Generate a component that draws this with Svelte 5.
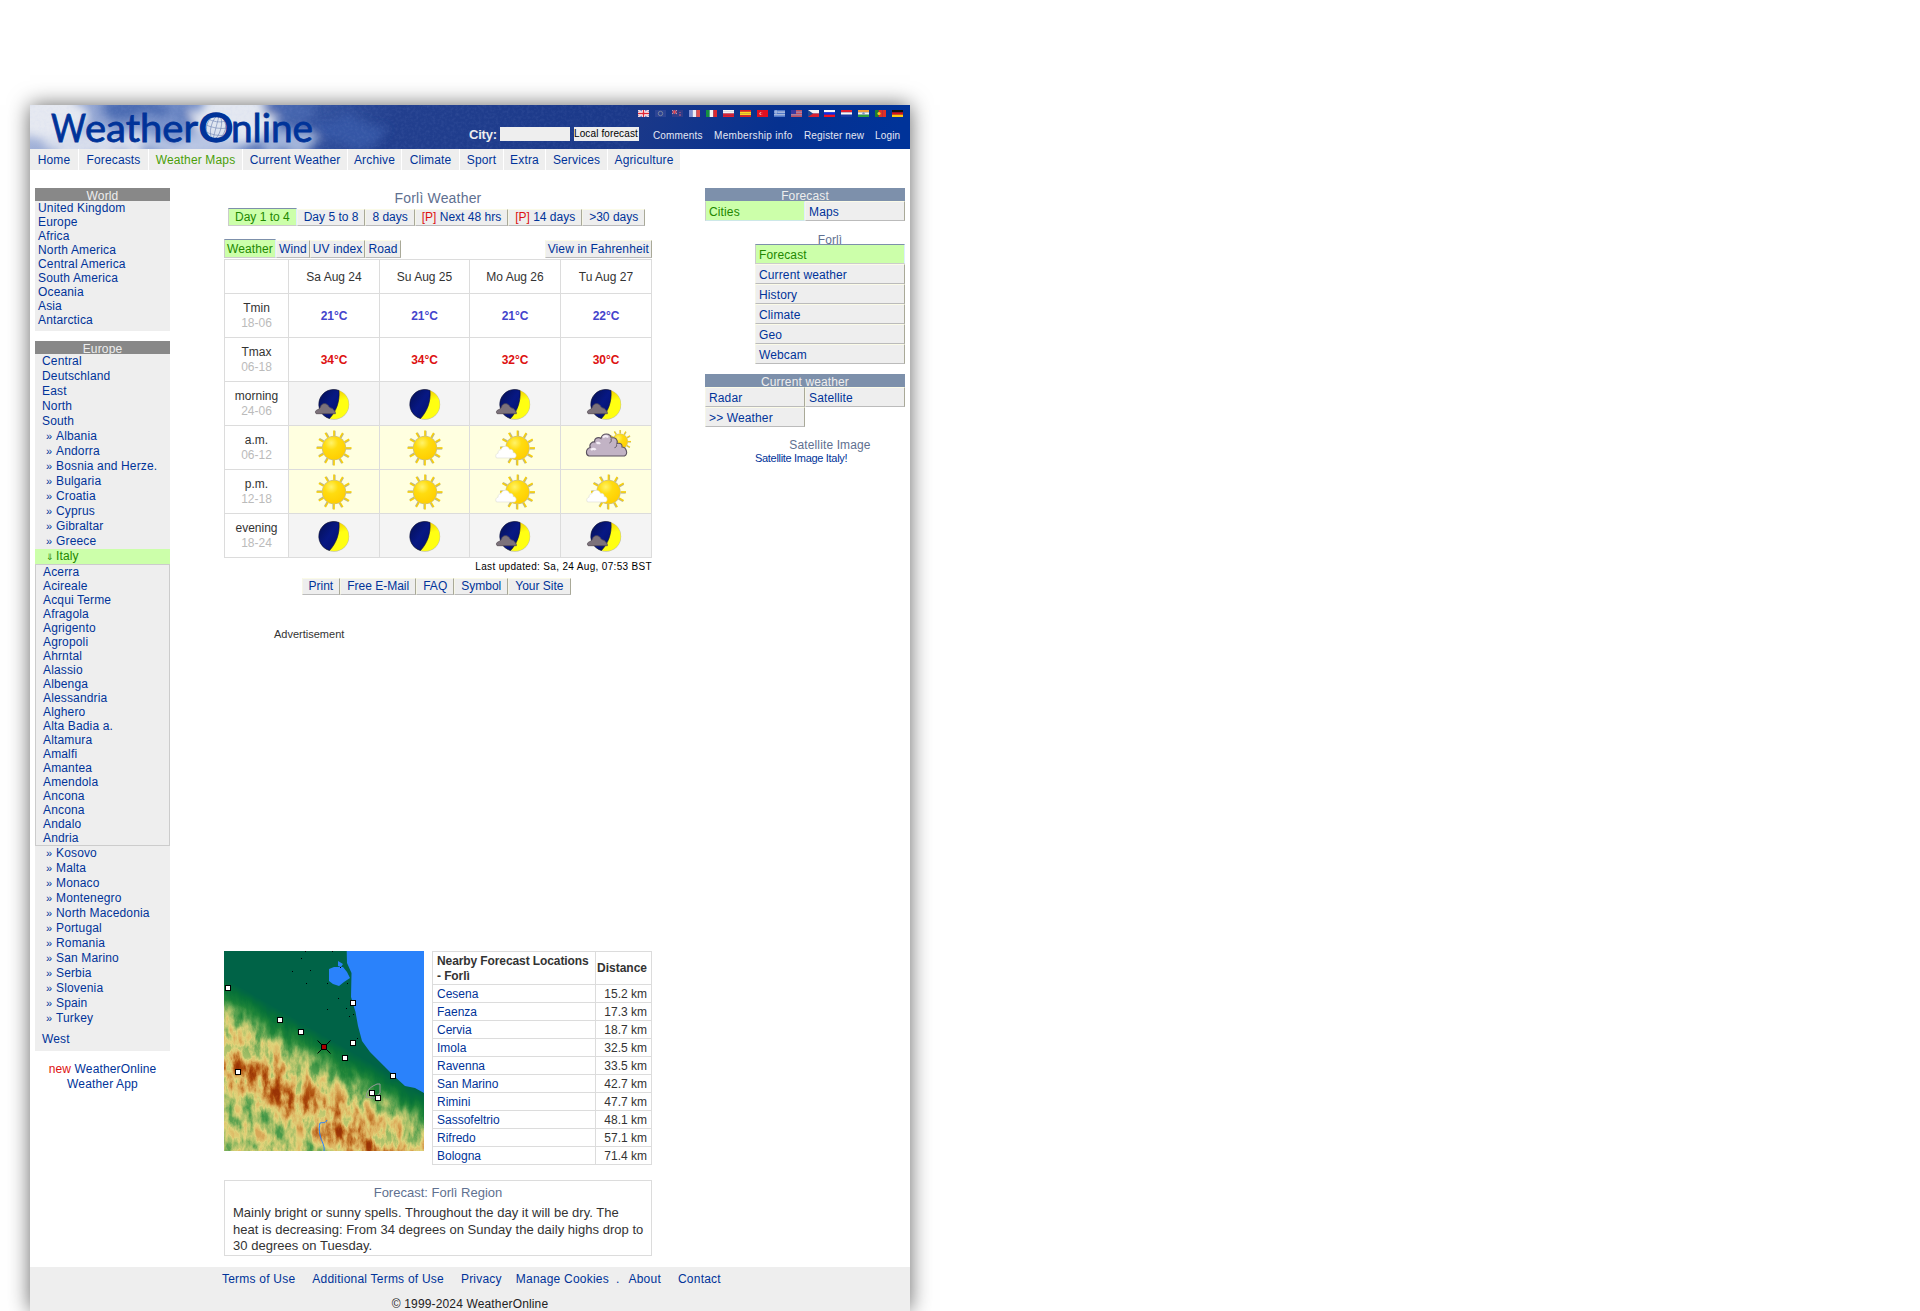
<script>
  const nav = [['Home', 48], ['Forecasts', 69], ['Weather Maps', 93], ['Current Weather', 104], ['Archive', 53], ['Climate', 57], ['Sport', 43], ['Extra', 41], ['Services', 61], ['Agriculture', 72]];
  const world = ['United Kingdom', 'Europe', 'Africa', 'North America', 'Central America', 'South America', 'Oceania', 'Asia', 'Antarctica'];
  const regions = ['Central', 'Deutschland', 'East', 'North', 'South'];
  const southA = ['Albania', 'Andorra', 'Bosnia and Herze.', 'Bulgaria', 'Croatia', 'Cyprus', 'Gibraltar', 'Greece'];
  const cities = ['Acerra', 'Acireale', 'Acqui Terme', 'Afragola', 'Agrigento', 'Agropoli', 'Ahrntal', 'Alassio', 'Albenga', 'Alessandria', 'Alghero', 'Alta Badia a.', 'Altamura', 'Amalfi', 'Amantea', 'Amendola', 'Ancona', 'Ancona', 'Andalo', 'Andria'];
  const southB = ['Kosovo', 'Malta', 'Monaco', 'Montenegro', 'North Macedonia', 'Portugal', 'Romania', 'San Marino', 'Serbia', 'Slovenia', 'Spain', 'Turkey'];
  const days = ['Sa Aug 24', 'Su Aug 25', 'Mo Aug 26', 'Tu Aug 27'];
  const rows = [
    { name: 'Tmin', hours: '18-06', kind: 'cold', cells: ['21°C', '21°C', '21°C', '22°C'] },
    { name: 'Tmax', hours: '06-18', kind: 'hot', cells: ['34°C', '34°C', '32°C', '30°C'] },
    { name: 'morning', hours: '24-06', kind: 'night', cells: ['mooncloud', 'moon', 'mooncloud', 'mooncloud'] },
    { name: 'a.m.', hours: '06-12', kind: 'day', cells: ['sun', 'sun', 'suncloud', 'cloudy'] },
    { name: 'p.m.', hours: '12-18', kind: 'day', cells: ['sun', 'sun', 'suncloud', 'suncloud'] },
    { name: 'evening', hours: '18-24', kind: 'night', cells: ['moon', 'moon', 'mooncloud', 'mooncloud'] }
  ];
  const nearby = [['Cesena', '15.2'], ['Faenza', '17.3'], ['Cervia', '18.7'], ['Imola', '32.5'], ['Ravenna', '33.5'], ['San Marino', '42.7'], ['Rimini', '47.7'], ['Sassofeltrio', '48.1'], ['Rifredo', '57.1'], ['Bologna', '71.4']];
  const stations = [[4, 37], [56, 69], [77, 81], [129, 52], [129, 92], [121, 107], [169, 125], [14, 121], [148, 142], [154, 147]];
  const villages = [[81, 0], [77, 7], [108, 0], [68, 20], [86, 19], [82, 32], [103, 32], [114, 47], [103, 58], [122, 57], [129, 63], [125, 65], [123, 32], [116, 16], [133, 87]];
  const rays = Array.from({ length: 12 }, (_, i) => i * 30);
  const flags = ['gb', 'eu', 'au', 'fr', 'it', 'pl', 'es', 'tr', 'gr', 'us', 'cz', 'ru', 'nl', 'in', 'pt', 'de'];
  const bands = {
    fr: ['v', '#7d8fd0', '#eeeef4', '#e05050'], it: ['v', '#149040', '#f4f4f4', '#dc2a30'],
    pl: ['h', '#f4f4f4', '#f4f4f4', '#dd2030', '#dd2030'], es: ['h', '#e02020', '#ffd520', '#ffd520', '#e02020'],
    ru: ['h', '#f8f8f8', '#1028e8', '#f01020'], nl: ['h', '#e02030', '#f8f8f8', '#1838a0'],
    in: ['h', '#f0a040', '#f4f4f4', '#30a040'], pt: ['v', '#208030', '#e03028', '#e03028'],
    de: ['h', '#111', '#e01010', '#ffcc10'], tr: ['h', '#e01020'], gr: ['h', '#5078c8', '#c8d4ec', '#5078c8', '#c8d4ec', '#5078c8'],
    us: ['h', '#c05060', '#c890a8', '#c05060', '#c890a8', '#c05060'], cz: ['h', '#f4f4f4', '#d82030'],
    gb: ['h', '#8080c0'], eu: ['h', '#2c4494'], au: ['h', '#303c88']
  };
</script>

{#snippet flag(code)}
  {@const b = bands[code]}
  {@const n = b.length - 1}
  <svg class="flag" width="11" height="7" viewBox="0 0 11 7">
    {#each b.slice(1) as c, i}
      {#if b[0] === 'v'}
        <rect x={(11 / n) * i} y="0" width={11 / n + 0.1} height="7" fill={c} />
      {:else}
        <rect x="0" y={(7 / n) * i} width="11" height={7 / n + 0.1} fill={c} />
      {/if}
    {/each}
    {#if code === 'gb'}
      <path d="M0 0L11 7M11 0L0 7" stroke="#f0d8e0" stroke-width="1.6" /><path d="M5.5 0V7M0 3.5H11" stroke="#fff" stroke-width="3" /><path d="M5.5 0V7M0 3.5H11" stroke="#e02838" stroke-width="1.4" />
    {:else if code === 'eu'}
      <circle cx="5.5" cy="3.5" r="2.2" fill="none" stroke="#8a90a0" stroke-width=".8" />
    {:else if code === 'au'}
      <path d="M0 0L5 4M5 0L0 4" stroke="#d8a0b0" /><path d="M2.5 0V4M0 2H5" stroke="#d84050" /><path d="M8 2v1M7 5h2" stroke="#d06080" />
    {:else if code === 'tr'}
      <circle cx="4" cy="3.5" r="1.6" fill="#f4c8cc" /><circle cx="4.7" cy="3.5" r="1.3" fill="#e01020" />
    {:else if code === 'gr'}
      <rect width="4" height="4" fill="#5078c8" /><path d="M2 0V4M0 2H4" stroke="#c8d4ec" stroke-width=".8" />
    {:else if code === 'us'}
      <rect width="5" height="4" fill="#3838a0" />
    {:else if code === 'cz'}
      <path d="M0 0L5 3.5L0 7Z" fill="#204890" />
    {:else if code === 'in'}
      <circle cx="5.5" cy="3.5" r="1.2" fill="#8090c0" />
    {:else if code === 'pt'}
      <circle cx="4" cy="3.5" r="1.6" fill="#f0d020" />
    {/if}
  </svg>
{/snippet}

{#snippet sunShape(cx, cy)}
  <g transform="translate({cx} {cy})">
    {#each rays as a}
      <g transform="rotate({a})"><path d="M.7 -12V-17.2" stroke="#b8b49a" stroke-width="1.8" /><path d="M0 -12V-17.5" stroke="#f5cf10" stroke-width="1.7" /></g>
    {/each}
    <circle r="12.2" fill="#c9bf8a" />
    <circle r="11.500" fill="url(#sunFill)" />
  </g>
{/snippet}

{#snippet icon(kind)}
  <svg class="wx" width="50" height="42" viewBox="0 0 50 42">
    {#if kind === 'sun'}
      {@render sunShape(25, 21)}
    {:else if kind === 'suncloud'}
      {@render sunShape(27.5, 21)}
      <path transform="translate(-.5 .5)" d="M7 30.500c-1.800-2.600 0-4.500 1.500-4.700 0-2.800 1.700-3.800 3-3.500 1-4.500 7.200-4.700 8.500-.5 3-.4 4 1.500 3.600 3.200 3.500 0 4 4.500 1.400 5.500z" fill="#fff" stroke="#dcdcd4" stroke-width=".6" />
    {:else if kind === 'cloudy'}
      <g transform="translate(0 -1.500)">
        <g transform="translate(39 16) scale(.66)">{@render sunShape(0, 0)}</g>
        <path d="M8 30.500c-3.500-1-3.700-7 1.200-8.500-1.500-4 2.500-6 4.500-5.500-.7-5 4.800-4.800 6.300-3.500 1.500-6.500 9.500-5.500 10.200-.5 4-1.200 7 1.800 5.800 5.500 3.500-1 5.500.8 5 3.500 4.300 0 6.500 7 2.500 9.000z" fill="#c2b3c5" stroke="#5c5360" stroke-width="1.100" />
        <path d="M10 24.500c2-1.800 4-1 4.500 0M15.500 18c1-1 2.500-1 3.500.5M22 12c2-2 4-1.500 5 0" fill="none" stroke="#f4eef6" stroke-width="2.200" />
        <path d="M30 13.500c.8 2-.3 3.500-1.500 4M35.500 19c.5 1.800-.6 3-2 3.200" fill="none" stroke="#5c5360" />
      </g>
    {:else}
      <g transform="translate(0 .700)">
        <circle cx="25" cy="20.900" r="15.200" fill="#c5c39c" />
        <circle cx="25" cy="20.700" r="14.700" fill="url(#moonLight)" />
        <path d="M30 6.800A14.800 14.800 0 1 0 20.500 34.800C27 28 31 18 30 6.800z" fill="url(#moonDark)" stroke="#050a3c" stroke-width=".6" />
        {#if kind === 'mooncloud'}
          <path transform="translate(-.8 -.5)" d="M8 30.500c-2-2.300.3-3.800 2-4.200 1.500-1 2.200-1.800 3-4.200 1.500-2 5-2.300 7 .2.700 1.500 1.600 2.400 4 2.900 1.500 1.600 3.500 2.900 3.200 5.300z" fill="#7c727b" stroke="#554c54" stroke-width=".8" />
        {/if}
      </g>
    {/if}
  </svg>
{/snippet}

<svg class="defs" width="0" height="0" aria-hidden="true">
  <defs>
    <radialGradient id="sunFill" cx=".38" cy=".28" r=".75"><stop offset="0" stop-color="#fff36a" /><stop offset=".4" stop-color="#ffdc10" /><stop offset="1" stop-color="#ffce00" /></radialGradient>
    <linearGradient id="moonDark" x1="0" y1="0" x2="1" y2="1"><stop offset="0" stop-color="#050f50" /><stop offset=".5" stop-color="#071884" /><stop offset="1" stop-color="#04106c" /></linearGradient>
    <linearGradient id="moonLight" x1=".5" y1="0" x2=".6" y2=".4"><stop offset="0" stop-color="#f0c800" /><stop offset="1" stop-color="#ffff12" /></linearGradient>
  </defs>
</svg>

<div class="page">
  <header>
    <svg class="sky" width="880" height="44" viewBox="0 0 880 44">
      <defs>
        <linearGradient id="sky" x1="0" x2="1" y1="0" y2=".02"><stop offset="0" stop-color="#a9b7da" /><stop offset=".12" stop-color="#7f96cb" /><stop offset=".25" stop-color="#6885c4" /><stop offset=".33" stop-color="#34539f" /><stop offset=".42" stop-color="#223f8e" /><stop offset=".7" stop-color="#1a3889" /><stop offset=".86" stop-color="#063190" /><stop offset="1" stop-color="#003399" /></linearGradient>
        <filter id="soft" x="-20%" y="-50%" width="140%" height="200%"><feTurbulence type="fractalNoise" baseFrequency=".04" numOctaves="3" seed="4" result="n" /><feDisplacementMap in="SourceGraphic" in2="n" scale="26" xChannelSelector="R" yChannelSelector="G" /><feGaussianBlur stdDeviation="5" /></filter>
        <filter id="grain" x="0" y="0" width="1" height="1"><feTurbulence type="fractalNoise" baseFrequency=".35" numOctaves="2" seed="8" /><feColorMatrix values="0 0 0 0 .4  0 0 0 0 .5  0 0 0 0 .85  1 0 0 0 -.4" /></filter>
      </defs>
      <rect width="880" height="44" fill="url(#sky)" />
      <g filter="url(#soft)">
        <ellipse cx="14" cy="12" rx="40" ry="24" fill="#e6e9f1" />
        <ellipse cx="64" cy="38" rx="52" ry="14" fill="#d8deec" />
        <ellipse cx="104" cy="3" rx="34" ry="11" fill="#4c6cb2" />
        <ellipse cx="160" cy="12" rx="16" ry="10" fill="#5c7abc" />
        <ellipse cx="204" cy="14" rx="44" ry="24" fill="#e4e8f1" />
        <ellipse cx="166" cy="40" rx="50" ry="11" fill="#b9c6e3" />
        <ellipse cx="262" cy="37" rx="30" ry="12" fill="#a3b5da" />
        <ellipse cx="262" cy="5" rx="22" ry="8" fill="#4565ae" />
        <ellipse cx="318" cy="26" rx="36" ry="14" fill="#3557a6" />
      </g>
      <rect width="600" height="44" filter="url(#grain)" opacity=".18" />
      <g class="logo">
        <text x="21" y="37" font-size="38" textLength="35" lengthAdjust="spacingAndGlyphs">W</text>
        <text x="55" y="37" font-size="38" textLength="113" lengthAdjust="spacingAndGlyphs">eather</text>
        <circle cx="186" cy="22.500" r="13" fill="#dfe5f0" opacity=".75" />
        <g fill="none" stroke="#6f84b4" stroke-width=".6"><ellipse cx="186" cy="22.500" rx="5" ry="12" transform="rotate(14 186 22.500)" /><ellipse cx="186" cy="22.500" rx="9.500" ry="12" transform="rotate(14 186 22.500)" /><path d="M189 11L183 34M174 19q12 6 24 4M176 13q11 6 20 3M174 26q11 6 23 4" /></g>
        <text class="ring" x="168.500" y="37.300" font-size="41" textLength="35" lengthAdjust="spacingAndGlyphs">O</text>
        <text x="201" y="37" font-size="38" textLength="82" lengthAdjust="spacingAndGlyphs">nline</text>
      </g>
    </svg>
    <div class="tools">
      <div class="flags">{#each flags as f}{@render flag(f)}{/each}</div>
      <div class="search">
        <span class="city">City:</span><span class="field"></span><span class="go">Local forecast</span>
        <a class="c1" href="#c">Comments</a><a class="c2" href="#m">Membership info</a><a class="c3" href="#r">Register new</a><a href="#l">Login</a>
      </div>
    </div>
  </header>

  <nav>
    {#each nav as [item, width]}<a href="#n" style:width="{width}px" class:on={item === 'Weather Maps'}>{item}</a>{/each}
  </nav>

  <main>
    <aside class="left">
      <h3>World</h3>
      <div class="world">{#each world as w}<a href="#w">{w}</a>{/each}</div>
      <h3>Europe</h3>
      <div class="europe">
        {#each regions as r}<a class="region" href="#r">{r}</a>{/each}
        {#each southA as s}<a class="sub" href="#s"><i>»</i>{s}</a>{/each}
        <a class="sub open" href="#s"><i>⇓</i>Italy</a>
        <div class="cities">{#each cities as c}<a href="#c">{c}</a>{/each}</div>
        {#each southB as s}<a class="sub" href="#s"><i>»</i>{s}</a>{/each}
        <a class="region west" href="#r">West</a>
      </div>
      <p class="app"><em>new</em> <a href="#a">WeatherOnline<br />Weather App</a></p>
    </aside>

    <section class="center">
      <h1>Forlì Weather</h1>
      <div class="tabs main-tabs">
        <a class="on" href="#t">Day 1 to 4</a><a href="#t">Day 5 to 8</a><a href="#t">8 days</a><a href="#t"><em>[P]</em> Next 48 hrs</a><a href="#t"><em>[P]</em> 14 days</a><a href="#t">&gt;30 days</a>
      </div>
      <div class="tabs small-tabs">
        <a class="on" href="#t">Weather</a><a href="#t">Wind</a><a href="#t">UV index</a><a href="#t">Road</a><a class="unit" href="#t">View in Fahrenheit</a>
      </div>
      <div class="forecast">
        <div class="cell head"></div>
        {#each days as d}<div class="cell head">{d}</div>{/each}
        {#each rows as r}
          <div class="cell label"><span>{r.name}</span><span class="hours">{r.hours}</span></div>
          {#each r.cells as c}
            <div class="cell {r.kind}">
              {#if r.kind === 'cold' || r.kind === 'hot'}<b>{c}</b>{:else}{@render icon(c)}{/if}
            </div>
          {/each}
        {/each}
      </div>
      <p class="updated">Last updated: Sa, 24 Aug, 07:53 BST</p>
      <div class="tabs bottom-tabs">
        <a href="#t">Print</a><a href="#t">Free E-Mail</a><a href="#t">FAQ</a><a href="#t">Symbol</a><a href="#t">Your Site</a>
      </div>
      <p class="ad">Advertisement</p>
      <div class="near">
        <svg class="map" width="200" height="200" viewBox="0 0 200 200">
          <defs>
            <linearGradient id="height" gradientUnits="userSpaceOnUse" x1="8" y1="31" x2="-50" y2="131">
              <stop offset="0" stop-color="#000" /><stop offset=".12" stop-color="#2b2b2b" /><stop offset=".28" stop-color="#747474" /><stop offset=".42" stop-color="#9c9c9c" /><stop offset=".64" stop-color="#c8c8c8" /><stop offset=".76" stop-color="#a4a4a4" /><stop offset=".88" stop-color="#6c6c6c" /><stop offset="1" stop-color="#858585" />
            </linearGradient>
            <filter id="terrain" x="0" y="0" width="1" height="1" color-interpolation-filters="sRGB">
              <feTurbulence type="fractalNoise" baseFrequency=".1 .045" numOctaves="5" seed="23" />
              <feColorMatrix values="2 0 0 0 -.5  2 0 0 0 -.5  2 0 0 0 -.5  0 0 0 0 1" result="noise" />
              <feComposite in="SourceGraphic" in2="noise" operator="arithmetic" k1=".65" k2=".67" />
              <feComponentTransfer>
                <feFuncR type="table" tableValues="0 .03 .12 .32 .62 .88 .87 .78 .68 .6" />
                <feFuncG type="table" tableValues=".39 .45 .52 .62 .74 .83 .7 .5 .3 .2" />
                <feFuncB type="table" tableValues=".28 .22 .22 .3 .4 .48 .38 .2 .05 .02" />
                <feFuncA type="linear" slope="0" intercept="1" />
              </feComponentTransfer>
            </filter>
          </defs>
          <rect width="200" height="200" fill="url(#height)" filter="url(#terrain)" />
          <path d="M122.700 0L123 12L127.500 22L127 46L131.500 61L134 75L138 90L146 101L160 115L170 125L181 135L191 137L200 142V0Z" fill="#2a82fb" />
          <path d="M105 18L110 16L119 16L123 21L126 27L120 31L115 35L109 33L105 30ZM114 10l5 3-2 3-3-1z" fill="#2a82fb" />
          {#each villages as [x, y]}<rect {x} {y} width="1" height="1" />{/each}
          <path d="M100 200c1-6-3-10-4-16-1-5-1-9 0-12 3-1 5 1 7-3" fill="none" stroke="#2a82fb" />
          <path d="M142 146q1-8 7-11l4-2h3v9l-6 5z" fill="none" stroke="#999" />
          <path d="M93.500 89.500l13 13M106.500 89.500l-13 13" stroke="#000" />
          {#each stations as [x, y]}<rect x={x - 2.5} y={y - 2.5} width="5" height="5" fill="#fff" stroke="#000" />{/each}
          <rect x="97.500" y="93.500" width="5" height="5" fill="#a00" stroke="#000" />
        </svg>
        <div class="distances">
          <b class="nh">Nearby Forecast Locations<br />- Forlì</b><b class="nh dist">Distance</b>
          {#each nearby as [name, km]}<a href="#n">{name}</a><span>{km} km</span>{/each}
        </div>
      </div>
      <div class="region-text">
        <h2>Forecast: Forlì Region</h2>
        <p>Mainly bright or sunny spells. Throughout the day it will be dry. The heat is decreasing: From 34 degrees on Sunday the daily highs drop to 30 degrees on Tuesday.</p>
      </div>
    </section>

    <aside class="right">
      <h3>Forecast</h3>
      <div class="pair"><a class="on" href="#f">Cities</a><a href="#f">Maps</a></div>
      <h4>Forlì</h4>
      <div class="menu"><a class="on" href="#f">Forecast</a><a href="#f">Current weather</a><a href="#f">History</a><a href="#f">Climate</a><a href="#f">Geo</a><a href="#f">Webcam</a></div>
      <h3>Current weather</h3>
      <div class="pair"><a href="#f">Radar</a><a href="#f">Satellite</a><a href="#f">&gt;&gt; Weather</a></div>
      <h5>Satellite Image</h5>
      <a class="sat" href="#s">Satellite Image Italy!</a>
    </aside>
  </main>

  <footer>
    <div class="links"><a href="#f">Terms of Use</a><a href="#f">Additional Terms of Use</a><a href="#f">Privacy</a><a href="#f">Manage Cookies</a><span>.</span><a href="#f">About</a><a href="#f">Contact</a></div>
    <p>© 1999-2024 WeatherOnline</p>
  </footer>
</div>

<style>
  :global(body) { background: #fff; overflow: hidden; }
  :global(#app) { height: 1311px; overflow: hidden; }
  h1, h2, h3, h4, h5, p { margin: 0; font-weight: normal; }
  a { color: #039; text-decoration: none; white-space: nowrap; }
  em { color: #d11; font-style: normal; }
  .defs { display: block; }
  .page { width: 880px; height: 1206px; margin: 105px 0 0 30px; background: #fff; box-shadow: 0 0 20px #666; font: 12px/15px 'Liberation Sans', Arial, sans-serif; color: #333; box-sizing: border-box; display: flex; flex-direction: column; }
  header { height: 44px; display: grid; flex: none; }
  header > * { grid-area: 1 / 1; }
  .sky { display: block; }
  .logo text { font-family: Lato, sans-serif; fill: #039; stroke: #039; stroke-width: .8; }
  .logo .ring { stroke-width: 1.4; }
  .tools { z-index: 1; padding-right: 8px; }
  .flags { display: flex; justify-content: flex-end; gap: 6px; padding: 5px 0 0; height: 7px; margin-right: -1px; }
  .flag { display: block; }
  .flag:nth-child(12) { margin-left: -1px; }
  .search { display: flex; padding: 10px 0 0 439px; height: 17px; color: #eee; }
  .city { font-size: 13px; font-weight: bold; line-height: 16px; width: 31px; letter-spacing: -.2px; }
  .field { width: 70px; height: 14px; background: #eee; }
  .go { margin-left: 4px; width: 65px; height: 14px; background: #eee; color: #000; font-size: 10px; line-height: 13px; white-space: nowrap; margin-right: 14px; letter-spacing: .12px; }
  .search a { color: #e4e8f4; font-size: 10px; line-height: 18px; letter-spacing: .15px; }
  .c1 { width: 61px; } .c2 { width: 90px; } .c3 { width: 71px; }
  .search .c2 { letter-spacing: .32px; }
  nav { display: flex; gap: 1px; height: 21px; flex: none; }
  nav a { background: #eee; text-align: center; line-height: 22px; height: 21px; letter-spacing: .15px; }
  nav .on { color: #4a9e08; }
  main { display: flex; height: 1097px; flex: none; padding: 18px 5px 0; box-sizing: border-box; }
  .left { width: 135px; letter-spacing: .15px; }
  h3 { height: 13px; font-size: 12px; line-height: 16px; background: #888; color: #eee; text-align: center; }
  .left a { display: block; }
  .world { background: #eee; padding: 0 3px 4px; line-height: 14px; margin-bottom: 10px; }
  .europe { background: #eee; padding-bottom: 4px; position: relative; }
  .europe .region { padding-left: 7px; }
  .europe .west { margin-top: 6px; }
  .sub { padding-left: 11px; }
  .sub i { font-style: normal; display: inline-block; width: 10px; font-size: 11px; }
  .open { background: #cfa; height: 15px; }
  .open i { font-size: 9px; }
  .left .open { color: #280; }
  .cities { border: 1px solid #ccc; padding-left: 7px; line-height: 14px; }
  .app { text-align: center; margin-top: 11px; }
  .left .app a { display: inline; }
  .center { width: 428px; margin-left: 54px; }
  h1 { font-size: 14px; line-height: 20px; text-align: center; color: #607090; letter-spacing: .18px; }
  .tabs { display: flex; align-items: flex-end; }
  .tabs a { background: #eee; border: 1px solid; border-color: #fbfbe8 #a9a998 #bbb #f6f6e8; padding: 0 6px; height: 15px; line-height: 15px; }
  .tabs .on, .pair .on, .menu .on { background: #cfa; color: #280; border-color: #7d90ab #def #ccc #ccc; }
  .main-tabs { margin-left: 4px; height: 18px; }
  .tabs .on { height: 16px; line-height: 17px; }
  .small-tabs { height: 19px; margin: 13px 0 1px; letter-spacing: .12px; }
  .tabs.small-tabs a { padding: 0 2px; height: 16px; line-height: 17px; }
  .tabs.small-tabs .on { height: 17px; line-height: 18px; }
  .tabs.small-tabs .unit { margin-left: auto; }
  .forecast { display: grid; grid-template-columns: 64px 91px 90px 91px 91px; grid-template-rows: 34px repeat(6, 44px); border: 1px solid #dcdcdc; border-width: 0 1px 1px 0; }
  .cell { border: 1px solid #dcdcdc; border-width: 1px 0 0 1px; display: flex; flex-direction: column; align-items: center; justify-content: center; }
  .head, .cold, .hot { padding-top: 1px; }
  .label { padding-top: 1px; box-sizing: border-box; }
  .hours { color: #bbb; }
  .cold { color: #44c; } .hot { color: #d11; }
  .cell b { letter-spacing: -.1px; }
  .night { background: #f4f4f4; } .day { background: #ffffe0; }
  .wx { display: block; }
  .updated { text-align: right; font-size: 10px; line-height: 15px; color: #000; margin-top: 1px; height: 19px; letter-spacing: .33px; }
  .bottom-tabs { justify-content: center; height: 17px; padding-right: 4px; }
  .ad { font-size: 11px; padding: 32px 0 0 50px; height: 324px; }
  .near { display: flex; gap: 8px; height: 229px; }
  .distances { width: 219px; height: 213px; display: grid; grid-template-columns: 163px 56px; grid-template-rows: 33px repeat(10, 18px); border: 1px solid #dcdcdc; border-width: 0 1px 1px 0; line-height: 18px; }
  .distances > * { border: 1px solid #dcdcdc; border-width: 1px 0 0 1px; padding: 0 4px; white-space: nowrap; }
  .distances span { text-align: right; }
  .distances .nh { line-height: 15px; padding-top: 2px; letter-spacing: -.1px; }
  .distances .dist { padding: 9px 0 0 1px; letter-spacing: 0; }
  .region-text { border: 1px solid #dcdcdc; height: 74px; padding: 0 4px 0 8px; }
  h2 { font-size: 13px; text-align: center; color: #607090; line-height: 15px; padding: 4px 4px 0 0; }
  .region-text p { font-size: 13px; line-height: 16.500px; padding-top: 5px; letter-spacing: .03px; }
  .right { width: 200px; margin-left: 53px; letter-spacing: .13px; }
  .right h3 { background: #7d90ab; }
  .pair { display: flex; flex-wrap: wrap; position: relative; }
  .pair a, .menu a { box-sizing: border-box; width: 100px; height: 20px; border: 1px solid; border-color: #fbfbe8 #a9a998 #bbb #f6f6e8; background: #eee; padding-left: 3px; line-height: 20px; }
  .pair .on { border-top-color: #cfa; border-bottom-color: #cde8e8; }
  h4 { padding: 10px 0 0 50px; height: 13px; font-size: 12px; line-height: 18px; text-align: center; color: #607090; }
  .menu { margin-left: 50px; display: flex; flex-direction: column; margin-bottom: 10px; position: relative; }
  .menu a { width: 150px; }
  h5 { font-size: 12px; padding: 11px 0 0 50px; text-align: center; color: #607090; height: 14px; }
  .sat { display: block; margin-left: 50px; font-size: 11px; line-height: 12px; letter-spacing: -.31px; }
  footer { flex: 1; background: #eee; color: #222; letter-spacing: .15px; }
  .links { display: flex; padding: 5px 0 0 192px; height: 20px; letter-spacing: .22px; }
  .links a { margin-right: 17px; }
  .links a:nth-child(3) { margin-right: 14px; }
  .links a:nth-child(4) { margin-right: 7px; }
  .links span { color: #039; margin-right: 9px; }
  footer p { text-align: center; padding-top: 5px; }
</style>
